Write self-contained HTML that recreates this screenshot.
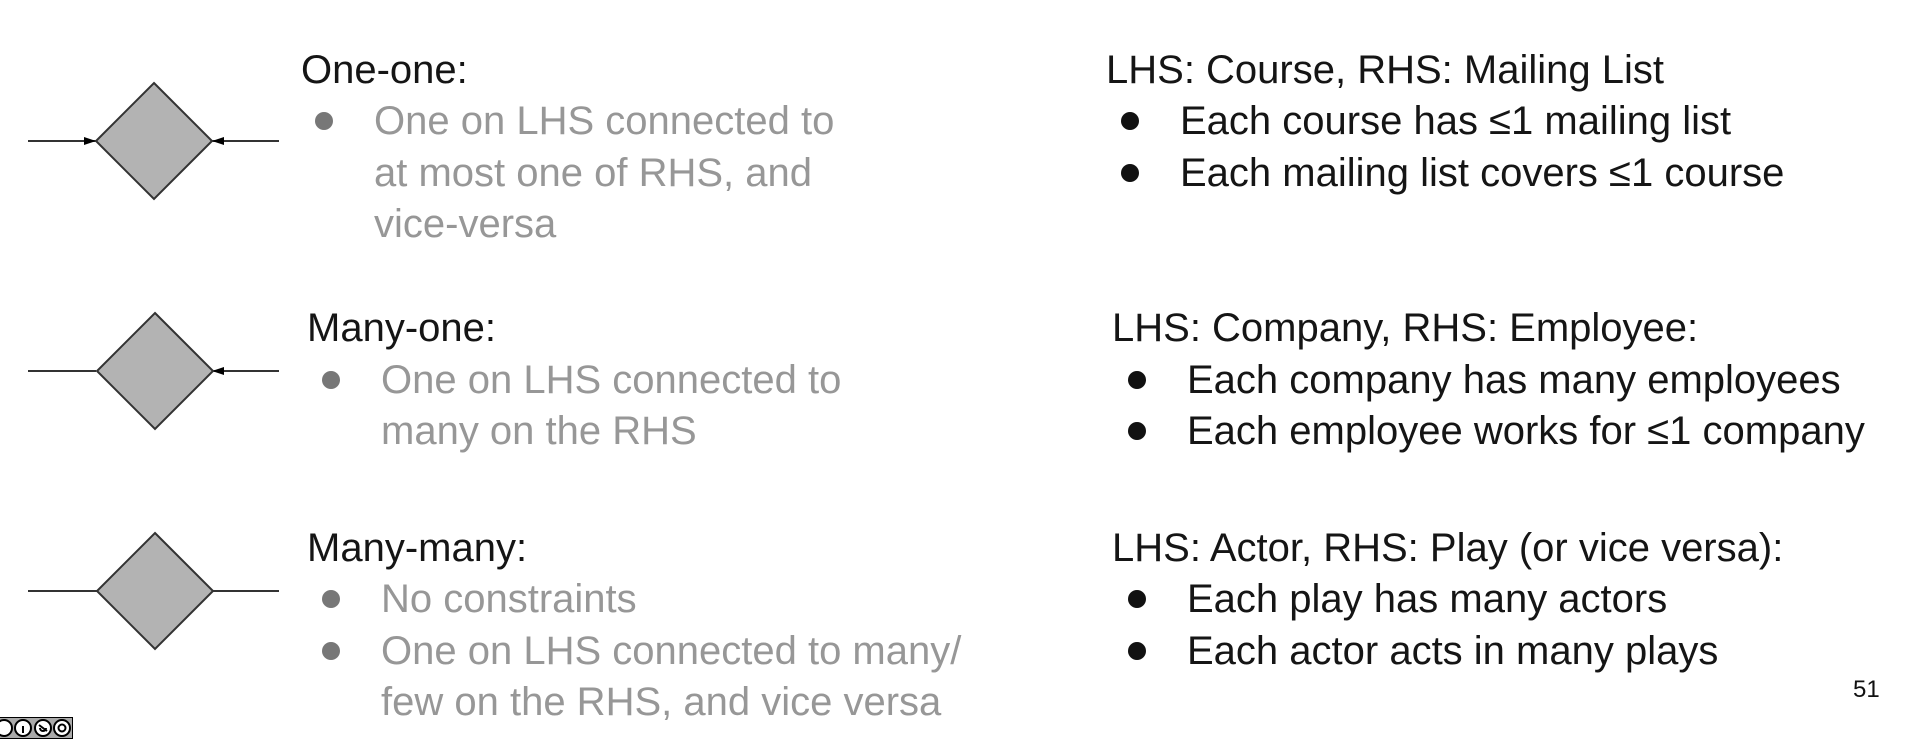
<!DOCTYPE html>
<html><head><meta charset="utf-8"><style>
body{margin:0;width:1912px;height:738px;background:#fff;overflow:hidden;position:relative;font-family:"Liberation Sans",sans-serif;}
.t{position:absolute;white-space:nowrap;font-size:40px;line-height:52px;letter-spacing:0px;}
.g{color:#979797;}
.k{color:#151515;}
.b{position:absolute;border-radius:50%;width:18px;height:18px;}
</style></head><body>
<svg width="300" height="738" style="position:absolute;left:0;top:0">
<defs><marker id="a" markerWidth="12" markerHeight="8" refX="12" refY="4" orient="auto" markerUnits="userSpaceOnUse"><path d="M0,0 L12,4 L0,8 z" fill="#000"/></marker></defs>
<g stroke="#333" stroke-width="2">
<line x1="28" y1="141" x2="96" y2="141" marker-end="url(#a)"/>
<line x1="279" y1="141" x2="212" y2="141" marker-end="url(#a)"/>
<polygon points="154,83 212,141 154,199 96,141" fill="#b3b3b3"/>
<line x1="28" y1="371" x2="96" y2="371"/>
<line x1="279" y1="371" x2="212" y2="371" marker-end="url(#a)"/>
<polygon points="155,313 213,371 155,429 97,371" fill="#b3b3b3"/>
<line x1="28" y1="591" x2="97" y2="591"/>
<line x1="279" y1="591" x2="213" y2="591"/>
<polygon points="155,533 213,591 155,649 97,591" fill="#b3b3b3"/>
</g></svg>

<div class="t k" style="left:301px;top:44px">One-one:</div>
<div class="b" style="left:315px;top:112px;background:#777"></div>
<div class="t g" style="left:374px;top:95px">One on LHS connected to</div>
<div class="t g" style="left:374px;top:147px">at most one of RHS, and</div>
<div class="t g" style="left:374px;top:198px">vice-versa</div>

<div class="t k" style="left:307px;top:302px">Many-one:</div>
<div class="b" style="left:322px;top:371px;background:#777"></div>
<div class="t g" style="left:381px;top:354px">One on LHS connected to</div>
<div class="t g" style="left:381px;top:405px">many on the RHS</div>

<div class="t k" style="left:307px;top:522px">Many-many:</div>
<div class="b" style="left:322px;top:590px;background:#777"></div>
<div class="t g" style="left:381px;top:573px">No constraints</div>
<div class="b" style="left:322px;top:642px;background:#777"></div>
<div class="t g" style="left:381px;top:625px">One on LHS connected to many/</div>
<div class="t g" style="left:381px;top:676px">few on the RHS, and vice versa</div>

<div class="t k" style="left:1106px;top:44px">LHS: Course, RHS: Mailing List</div>
<div class="b" style="left:1121px;top:112px;background:#111"></div>
<div class="t k" style="left:1180px;top:95px">Each course has ≤1 mailing list</div>
<div class="b" style="left:1121px;top:164px;background:#111"></div>
<div class="t k" style="left:1180px;top:147px">Each mailing list covers ≤1 course</div>

<div class="t k" style="left:1112px;top:302px">LHS: Company, RHS: Employee:</div>
<div class="b" style="left:1128px;top:371px;background:#111"></div>
<div class="t k" style="left:1187px;top:354px">Each company has many employees</div>
<div class="b" style="left:1128px;top:422px;background:#111"></div>
<div class="t k" style="left:1187px;top:405px">Each employee works for ≤1 company</div>

<div class="t k" style="left:1112px;top:522px">LHS: Actor, RHS: Play (or vice versa):</div>
<div class="b" style="left:1128px;top:590px;background:#111"></div>
<div class="t k" style="left:1187px;top:573px">Each play has many actors</div>
<div class="b" style="left:1128px;top:642px;background:#111"></div>
<div class="t k" style="left:1187px;top:625px">Each actor acts in many plays</div>

<div style="position:absolute;left:1853px;top:676px;font-size:24px;color:#111">51</div>

<div style="position:absolute;left:-2px;top:717px;width:75px;height:22px;background:#aaa;border:1px solid #000;box-sizing:border-box"></div>
<svg width="80" height="22" style="position:absolute;left:0;top:717px">
<g fill="#fff" stroke="#000" stroke-width="2">
<circle cx="4" cy="11" r="8"/><circle cx="23" cy="11" r="8"/><circle cx="43" cy="11" r="8"/><circle cx="62" cy="11" r="8"/></g>
<g stroke="#000" stroke-width="2" fill="none"><line x1="23" y1="9" x2="23" y2="16"/><path d="M39 8 L47 14 M40 11 a3 3 0 1 0 6 0"/><circle cx="62" cy="11" r="3.5"/></g>
</svg>
</body></html>
